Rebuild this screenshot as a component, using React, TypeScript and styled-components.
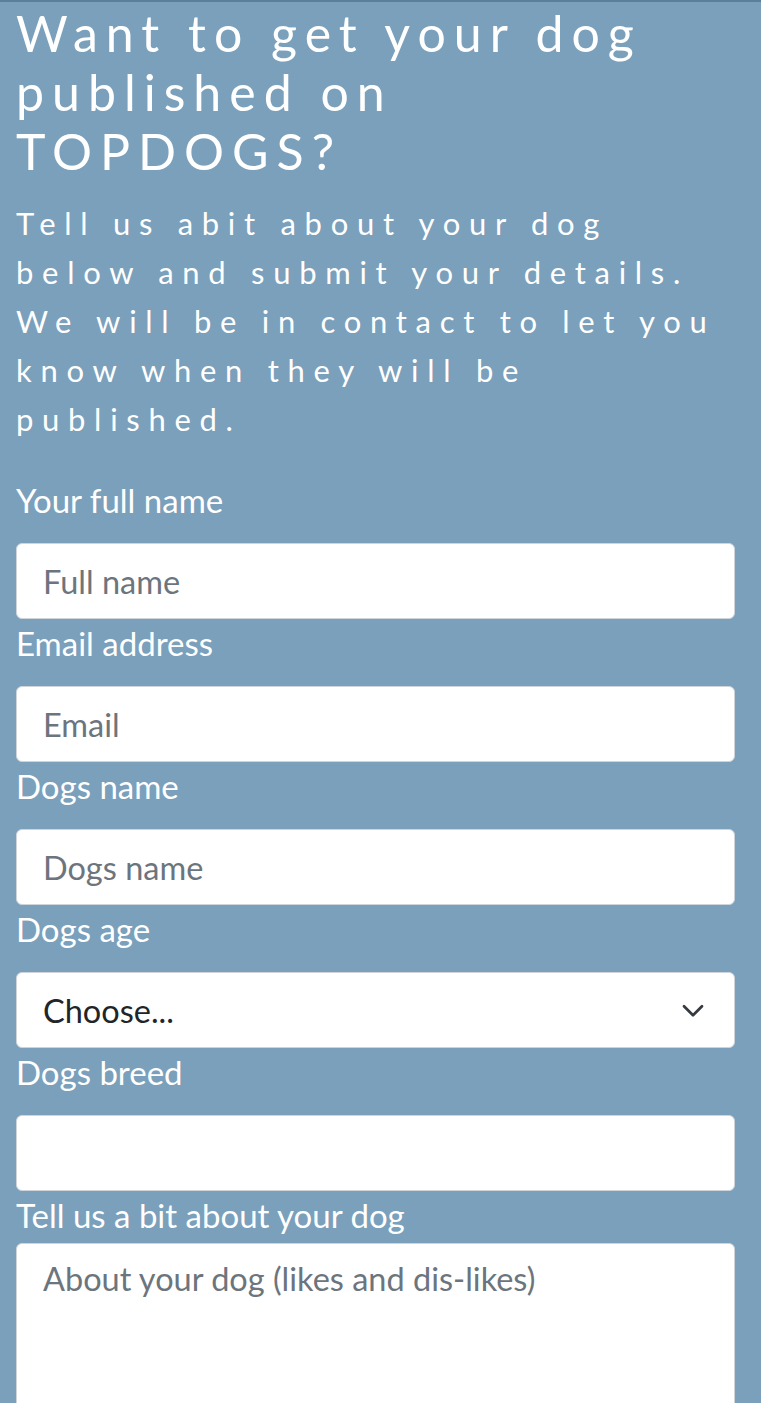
import React, { FC } from 'react';
import styled, { createGlobalStyle } from 'styled-components';

const GlobalStyle = createGlobalStyle`
  html, body {
    margin: 0;
    padding: 0;
    background: #7ba0bb;
  }

  body {
    font-family: Lato, 'Open Sans', sans-serif;
    color: #fff;
  }

  * {
    box-sizing: border-box;
  }
`;

const Page = styled.main`
  min-height: 1403px;
  border-top: 2px solid #5b7f9a;
  padding: 2px 26px 40px 16px;
`;

const Heading = styled.h1`
  margin: 0;
  font-size: 50px;
  font-weight: 400;
  line-height: 59px;
  letter-spacing: 8px;
`;

const Intro = styled.p`
  margin: 18px 0 32px;
  font-size: 31px;
  line-height: 49px;
  letter-spacing: 8.7px;
`;

const Form = styled.form`
  display: flex;
  flex-direction: column;
`;

const Label = styled.label<{ $tight?: boolean }>`
  display: block;
  font-size: 33px;
  line-height: 49px;
  margin-bottom: ${p => (p.$tight ? '3px' : '18px')};
`;

const fieldBase = `
  display: block;
  width: 100%;
  border: 1px solid #ced4da;
  border-radius: 6px;
  background: #fff;
  font-family: Lato, 'Open Sans', sans-serif;
  font-size: 32.5px;
  color: #212529;
  padding: 0 26px;
  outline: none;

  &::placeholder {
    color: #6c757d;
  }
`;

const Input = styled.input`
  ${fieldBase}
  height: 76px;
`;

const SelectWrap = styled.div`
  position: relative;
`;

const Select = styled.select`
  ${fieldBase}
  height: 76px;
  appearance: none;
`;

const Chevron = styled.svg`
  position: absolute;
  right: 30px;
  top: 50%;
  transform: translateY(-50%);
  width: 24px;
  height: 18px;
  pointer-events: none;
`;

const TextArea = styled.textarea`
  ${fieldBase}
  height: 220px;
  padding-top: 11px;
  line-height: 1.5;
  resize: none;
`;

const App: FC = () => (
  <>
    <GlobalStyle />
    <Page>
      <Heading>Want to get your dog published on TOPDOGS?</Heading>
      <Intro>
        Tell us abit about your dog below and submit your details. We will be in contact to let you know when they
        will be published.
      </Intro>
      <Form>
        <Label htmlFor="fullName">Your full name</Label>
        <Input id="fullName" placeholder="Full name" />
        <Label htmlFor="email">Email address</Label>
        <Input id="email" type="email" placeholder="Email" />
        <Label htmlFor="dogName">Dogs name</Label>
        <Input id="dogName" placeholder="Dogs name" />
        <Label htmlFor="dogAge">Dogs age</Label>
        <SelectWrap>
          <Select id="dogAge" defaultValue="">
            <option value="">Choose...</option>
            <option>Puppy</option>
            <option>Adult</option>
            <option>Senior</option>
          </Select>
          <Chevron viewBox="0 0 16 12">
            <path d="M2 3.5l6 6 6-6" fill="none" stroke="#343a40" strokeWidth="1.8" strokeLinecap="round" strokeLinejoin="round" />
          </Chevron>
        </SelectWrap>
        <Label htmlFor="dogBreed">Dogs breed</Label>
        <Input id="dogBreed" />
        <Label htmlFor="about" $tight>
          Tell us a bit about your dog
        </Label>
        <TextArea id="about" placeholder="About your dog (likes and dis-likes)" />
      </Form>
    </Page>
  </>
);

export default App;
